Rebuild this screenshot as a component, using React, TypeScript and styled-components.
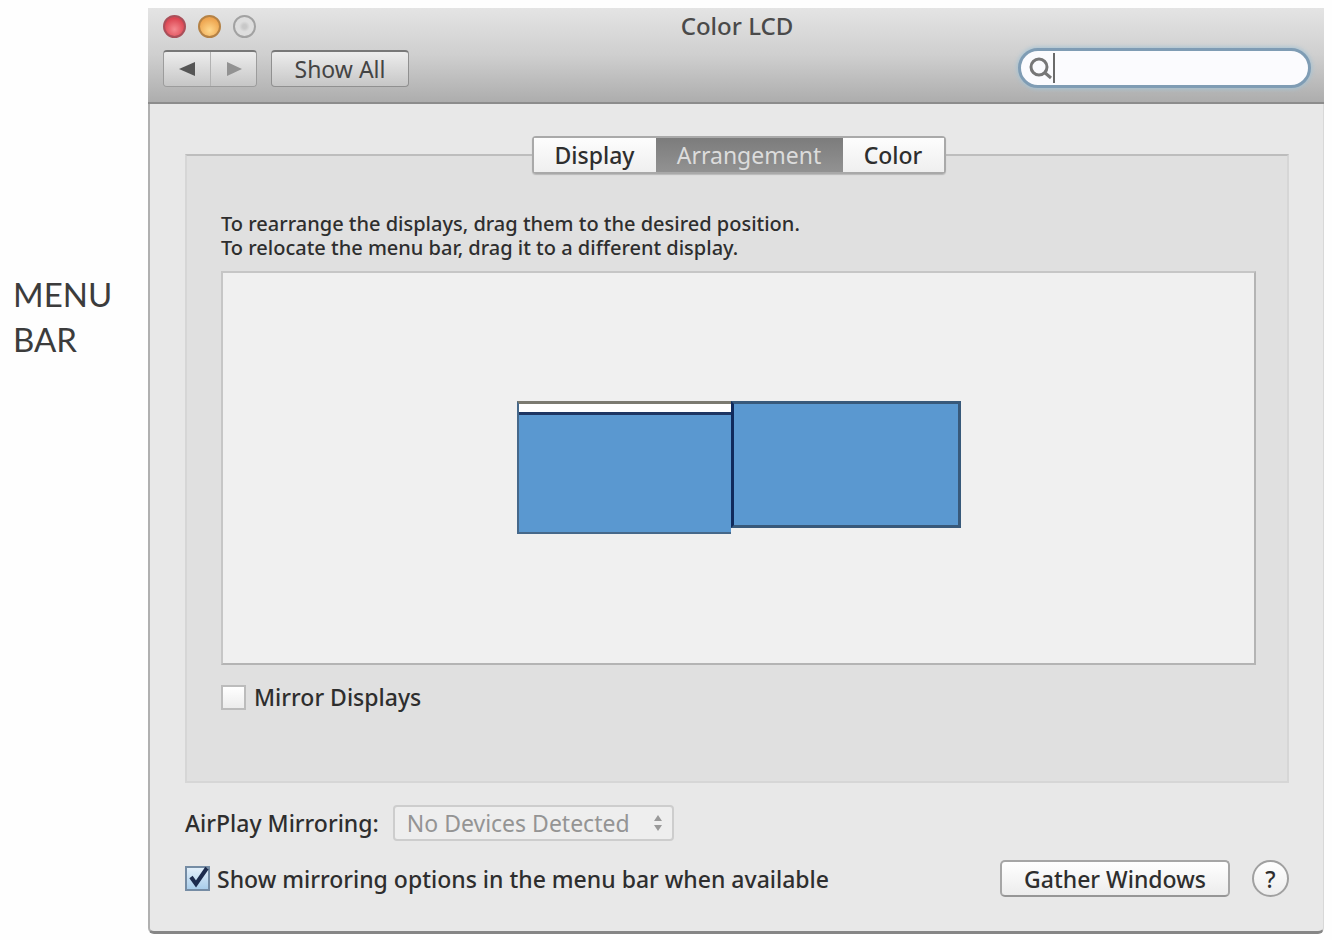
import React, { useState } from "react";
import styled, { createGlobalStyle } from "styled-components";

const GlobalStyle = createGlobalStyle`
  *, *::before, *::after { box-sizing: border-box; }
  body {
    margin: 0;
    background: #fefefe;
    color: #2e2e2e;
    font-family: "Noto Sans", "Open Sans", sans-serif;
    font-size: 23px;
    line-height: 28px;
  }
  button, input, select { font: inherit; color: inherit; margin: 0; }
`;

const Page = styled.div`
  display: grid;
  grid-template-columns: 148px 1fr;
  padding: 8px 8px 6px 0;
`;

const Caption = styled.aside`
  padding: 264px 12px 0 13px;
  font-family: Lato, "Open Sans", sans-serif;
  font-size: 33px;
  line-height: 45px;
  color: #3c3c3c;
`;

const Window = styled.main`
  background: #e8e8e8;
  border: 1px solid #a6a6a6;
  border-width: 0 1px 3px 2px;
  border-color: #a6a6a6 #d8d8d8 #868686 #b0b0b0;
  border-radius: 0 0 6px 6px;
`;

const Toolbar = styled.header`
  margin-left: -2px;
  margin-right: -1px;
  padding: 0 13px 14px 15px;
  background: linear-gradient(#e4e4e4, #cfcfcf 50%, #adadad);
  border-bottom: 2px solid #8c8c8c;
`;

const TitleRow = styled.div`
  display: grid;
  grid-template-columns: 1fr auto 1fr;
  align-items: center;
  height: 36px;
  margin-bottom: 4px;
`;

const Title = styled.h1`
  margin: 0;
  font-size: 24px;
  line-height: 28px;
  font-weight: 500;
  color: #4a4a4a;
`;

const Lights = styled.div`
  display: flex;
  gap: 12px;
`;

const Light = styled.button<{ $fill: string; $edge: string }>`
  width: 23px;
  height: 23px;
  padding: 0;
  border: 2px solid ${(p) => p.$edge};
  border-radius: 50%;
  background: ${(p) => p.$fill};
`;

const ToolRow = styled.div`
  display: flex;
  align-items: center;
  height: 40px;
`;

const NavGroup = styled.div`
  display: flex;
  margin-right: 14px;
  border: 1px solid #9c9c9c;
  border-top: 2px solid #787878;
  border-radius: 4px;
  overflow: hidden;
`;

const NavButton = styled.button`
  display: flex;
  align-items: center;
  justify-content: center;
  width: 46px;
  height: 34px;
  padding: 0;
  border: 0;
  background: linear-gradient(#ededed, #c6c6c6);
  & + & { border-left: 1px solid #b2b2b2; }
`;

const ShowAll = styled.button`
  width: 138px;
  height: 37px;
  padding: 0;
  border: 1px solid #909090;
  border-top: 2px solid #787878;
  border-radius: 4px;
  background: linear-gradient(#ededed, #c6c6c6);
  color: #444;
`;

const Search = styled.label`
  display: flex;
  align-items: center;
  width: 293px;
  height: 40px;
  margin-left: auto;
  padding: 0 16px 0 8px;
  border: 3px solid #7f9cb4;
  border-radius: 20px;
  background: #fbfbfe;
  box-shadow: 0 0 4px 1px #a5c3d4;
`;

const SearchInput = styled.input`
  flex: 1;
  min-width: 0;
  height: 30px;
  padding: 0 4px;
  border: 0;
  border-left: 2px solid #6a6a6a;
  outline: 0;
  background: transparent;
`;

const Content = styled.div`
  padding: 50px 34px 34px 35px;
`;

const Panel = styled.section`
  padding: 0 31px 70px 34px;
  border: 2px solid #d6d6d6;
  border-top-color: #bdbdbd;
  background: #e0e0e0;
`;

const Tabs = styled.div`
  display: flex;
  width: max-content;
  margin: -20px auto 38px;
  border: 2px solid #a9a9a9;
  border-radius: 4px;
  box-shadow: 0 1px 1px #b8b8b8;
`;

const Tab = styled.button<{ $width: number }>`
  width: ${(p) => p.$width}px;
  height: 34px;
  padding: 0;
  border: 0;
  background: linear-gradient(#fdfdfd, #efefef);
  font-weight: 500;
  &[aria-selected="true"] {
    background: linear-gradient(#7c7c7c, #929292);
    color: #dcdcdc;
    font-weight: 400;
  }
`;

const Hint = styled.p`
  margin: 0 0 11px;
  font-size: 20px;
  line-height: 24px;
  font-weight: 500;
`;

const Canvas = styled.div`
  display: flex;
  align-items: flex-start;
  justify-content: center;
  min-height: 394px;
  padding-top: 128px;
  border: 2px solid #bcbcbc;
  border-color: #c6c6c6 #b4b4b4 #b4b4b4 #c6c6c6;
  background: #f0f0f0;
`;

const Monitor = styled.div<{ $width: number; $height: number; $main?: boolean }>`
  width: ${(p) => p.$width}px;
  height: ${(p) => p.$height}px;
  border: ${(p) => (p.$main ? "2px solid #46688a" : "3px solid #38597a")};
  border-top: 3px solid ${(p) => (p.$main ? "#7b7a70" : "#38597a")};
  border-left-color: ${(p) => (p.$main ? "#46688a" : "#102a5c")};
  ${(p) => p.$main && "border-right-width: 0;"}
  background: #5a98d0;
`;

const MenuBar = styled.div`
  height: 11px;
  background: #fff;
  border-bottom: 3px solid #1d3562;
`;

const CheckRow = styled.label<{ $gap: number }>`
  display: flex;
  align-items: center;
  gap: ${(p) => p.$gap}px;
  font-weight: 500;
`;

const CheckWrap = styled.span`
  display: grid;
  width: 25px;
  height: 25px;
  & > * { grid-area: 1 / 1; }
  & svg { pointer-events: none; }
`;

const CheckBox = styled.input`
  appearance: none;
  width: 25px;
  height: 25px;
  border: 2px solid #bcbcbc;
  background: linear-gradient(#fff, #ececec);
  &:checked {
    border-color: #758ca4;
    background: linear-gradient(#e2effa, #a9cdea);
  }
  &:not(:checked) + svg { display: none; }
`;

const MirrorRow = styled.div`
  margin-top: 18px;
`;

const AirPlayRow = styled.div`
  display: flex;
  align-items: center;
  gap: 14px;
  margin: 22px 0 19px;
  font-weight: 500;
`;

const SelectWrap = styled.span`
  display: grid;
  align-items: center;
  width: 281px;
  & > * { grid-area: 1 / 1; }
  & svg { justify-self: end; margin-right: 11px; pointer-events: none; }
`;

const DeviceSelect = styled.select`
  appearance: none;
  width: 100%;
  height: 36px;
  padding: 0 26px 0 12px;
  border: 2px solid #cdcdcd;
  border-radius: 4px;
  background: #eee;
  font-weight: 400;
  &:disabled { color: #949494; opacity: 1; }
`;

const Footer = styled.footer`
  display: flex;
  align-items: center;
  justify-content: space-between;
`;

const Actions = styled.div`
  display: flex;
  align-items: center;
  gap: 22px;
`;

const PushButton = styled.button`
  width: 230px;
  height: 37px;
  padding: 0;
  border: 2px solid #a6a6a6;
  border-bottom-color: #969696;
  border-radius: 5px;
  background: linear-gradient(#fff, #ececec);
  font-weight: 500;
`;

const HelpButton = styled.button`
  width: 37px;
  height: 37px;
  padding: 0;
  border: 2px solid #a0a0a0;
  border-radius: 50%;
  background: linear-gradient(#fff, #ededed);
  font-weight: 500;
`;

const tabs = [
  { name: "Display", width: 122 },
  { name: "Arrangement", width: 187 },
  { name: "Color", width: 101 },
];

export default function App() {
  const [tab, setTab] = useState("Arrangement");
  return (
    <>
      <GlobalStyle />
      <Page>
        <Caption>MENU BAR</Caption>
        <Window>
          <Toolbar>
            <TitleRow>
              <Lights>
                <Light aria-label="Close" $edge="#a9505a" $fill="radial-gradient(circle at 50% 65%, #f58a90, #dc4652 70%)" />
                <Light aria-label="Minimize" $edge="#b58245" $fill="radial-gradient(circle at 50% 70%, #ffd88c, #eda24c 75%)" />
                <Light aria-label="Zoom" $edge="#a2a2a2" $fill="radial-gradient(circle, #c8c8c8 15%, #dedede 40%)" />
              </Lights>
              <Title>Color LCD</Title>
            </TitleRow>
            <ToolRow>
              <NavGroup>
                <NavButton aria-label="Back">
                  <svg width="18" height="16" viewBox="0 0 18 16"><path d="M17 1v14L1 8z" fill="#555" /></svg>
                </NavButton>
                <NavButton aria-label="Forward">
                  <svg width="18" height="16" viewBox="0 0 18 16"><path d="M2 1v14l15-7z" fill="#929292" /></svg>
                </NavButton>
              </NavGroup>
              <ShowAll>Show All</ShowAll>
              <Search>
                <svg width="24" height="26" viewBox="0 0 24 26" fill="none" stroke="#777" strokeWidth="3" aria-hidden="true">
                  <circle cx="10" cy="12" r="8" />
                  <path d="M15 17l7 6" />
                </svg>
                <SearchInput type="text" aria-label="Search" />
              </Search>
            </ToolRow>
          </Toolbar>
          <Content>
            <Panel>
              <Tabs role="tablist">
                {tabs.map((t) => (
                  <Tab key={t.name} role="tab" $width={t.width} aria-selected={t.name === tab} onClick={() => setTab(t.name)}>
                    {t.name}
                  </Tab>
                ))}
              </Tabs>
              <Hint>
                To rearrange the displays, drag them to the desired position.
                <br />
                To relocate the menu bar, drag it to a different display.
              </Hint>
              <Canvas>
                <Monitor $width={214} $height={133} $main>
                  <MenuBar />
                </Monitor>
                <Monitor $width={230} $height={127} />
              </Canvas>
              <MirrorRow>
                <CheckRow $gap={8}>
                  <CheckWrap>
                    <CheckBox type="checkbox" />
                    <svg width="25" height="25" viewBox="0 0 25 25" fill="none" stroke="#1c2b4d" strokeWidth="4"><path d="M6 11l5 7L22 2" /></svg>
                  </CheckWrap>
                  Mirror Displays
                </CheckRow>
              </MirrorRow>
            </Panel>
            <AirPlayRow>
              <label htmlFor="airplay">AirPlay Mirroring:</label>
              <SelectWrap>
                <DeviceSelect id="airplay" disabled>
                  <option>No Devices Detected</option>
                </DeviceSelect>
                <svg width="10" height="18" viewBox="0 0 10 18" fill="#999" aria-hidden="true"><path d="M5 1l4 6H1zM5 17l4-6H1z" /></svg>
              </SelectWrap>
            </AirPlayRow>
            <Footer>
              <CheckRow $gap={7}>
                <CheckWrap>
                  <CheckBox type="checkbox" defaultChecked />
                  <svg width="25" height="25" viewBox="0 0 25 25" fill="none" stroke="#1c2b4d" strokeWidth="4"><path d="M6 11l5 7L22 2" /></svg>
                </CheckWrap>
                Show mirroring options in the menu bar when available
              </CheckRow>
              <Actions>
                <PushButton>Gather Windows</PushButton>
                <HelpButton aria-label="Help">?</HelpButton>
              </Actions>
            </Footer>
          </Content>
        </Window>
      </Page>
    </>
  );
}
